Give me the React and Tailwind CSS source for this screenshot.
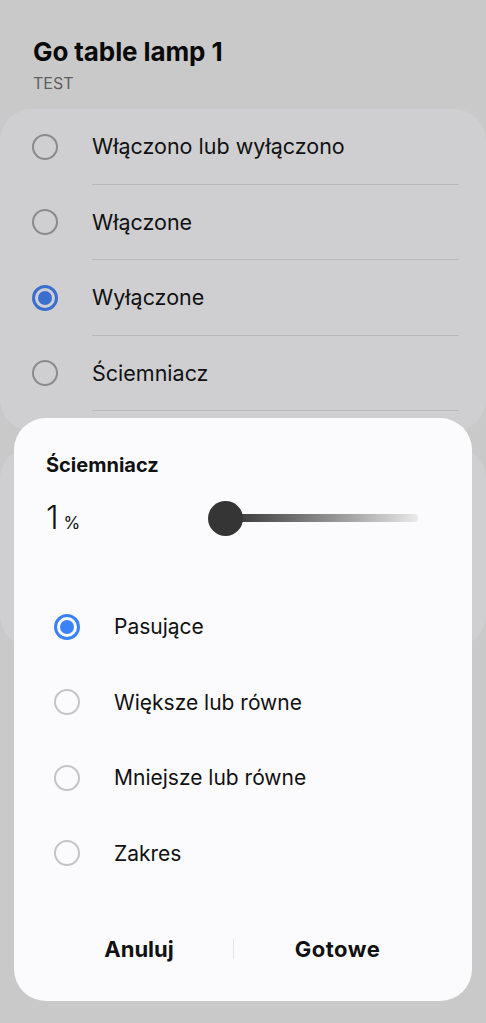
import React from 'react';

const font = { fontFamily: 'Inter, "Noto Sans", sans-serif' };

function Radio({ checked, size = 24, dim }) {
  if (checked) {
    return (
      <span
        className={`flex items-center justify-center rounded-full border-[3px] ${dim ? 'border-[#3a6fd0]' : 'border-[#3b82f6]'}`}
        style={{ width: size, height: size }}
      >
        <span className={`rounded-full ${dim ? 'bg-[#3a6fd0]' : 'bg-[#3b82f6]'}`} style={{ width: size - 12, height: size - 12 }} />
      </span>
    );
  }
  return (
    <span
      className={`rounded-full border-2 ${dim ? 'border-[#8a8a8a]' : 'border-[#c4c4c6]'}`}
      style={{ width: size, height: size }}
    />
  );
}

export default function App() {
  const states = [
    { label: 'Włączono lub wyłączono', checked: false },
    { label: 'Włączone', checked: false },
    { label: 'Wyłączone', checked: true },
    { label: 'Ściemniacz', checked: false },
  ];
  const modes = [
    { label: 'Pasujące', checked: true },
    { label: 'Większe lub równe', checked: false },
    { label: 'Mniejsze lub równe', checked: false },
    { label: 'Zakres', checked: false },
  ];

  return (
    <div className="relative w-[486px] h-[1023px] overflow-hidden bg-[#c9c9c9]" style={font}>
      {/* background screen (dimmed) */}
      <div className="px-[33px] pt-[36px]">
        <h1 className="text-[26px] leading-[32px] font-bold text-[#0a0a0a] tracking-[-0.1px]">Go table lamp 1</h1>
        <p className="text-[16px] leading-[20px] text-[#5f5f5f] mt-[5px]">TEST</p>
      </div>
      <div className="mt-[16px] rounded-[32px] bg-[#cfcfd1] pb-[20px]">
        {states.map((s) => (
          <div key={s.label} className="flex items-center h-[75.5px]">
            <div className="w-[92px] flex justify-start pl-[32px]">
              <Radio checked={s.checked} size={26} dim />
            </div>
            <div className="flex-1 h-full flex items-center border-b border-[#b9b9bb] mr-[27px] text-[21.5px] text-[#111]">
              {s.label}
            </div>
          </div>
        ))}
      </div>
      <div className="mt-[16px] h-[200px] rounded-[32px] bg-[#cfcfd1]" />

      {/* dialog */}
      <div className="absolute left-[14px] right-[14px] top-[418px] h-[583px] rounded-[32px] bg-[#fbfbfd] text-[#111]">
        <div className="px-[32px] pt-[34px]">
          <h2 className="text-[20px] leading-[26px] font-bold">Ściemniacz</h2>
          <div className="flex items-center mt-[22px] h-[36px]">
            <div className="w-[162px] flex items-baseline">
              <span className="text-[32px] leading-[36px] font-light">1</span>
              <span className="text-[17px] ml-[5px]">%</span>
            </div>
            <div className="relative flex items-center w-[210px] h-[36px]">
              <div className="ml-[17px] h-[8px] w-[193px] rounded-full bg-gradient-to-r from-[#333] to-[#eaeaea]" />
              <div className="absolute left-0 top-[1px] w-[35px] h-[35px] rounded-full bg-[#353535]" />
            </div>
          </div>
        </div>
        <div className="mt-[53px]">
          {modes.map((m) => (
            <div key={m.label} className="flex items-center h-[75.5px]">
              <div className="w-[100px] flex justify-start pl-[40px]">
                <Radio checked={m.checked} size={26} />
              </div>
              <span className="text-[21px]">{m.label}</span>
            </div>
          ))}
        </div>
        <div className="flex items-center mt-[28px] h-[60px] px-[31px]">
          <button className="w-[188px] text-[22px] font-bold text-[#111] text-center">Anuluj</button>
          <div className="w-px h-[20px] bg-[#e4e4e6]" />
          <button className="flex-1 text-[22px] font-bold text-[#111] text-center tracking-[0.5px]">Gotowe</button>
        </div>
      </div>
    </div>
  );
}
